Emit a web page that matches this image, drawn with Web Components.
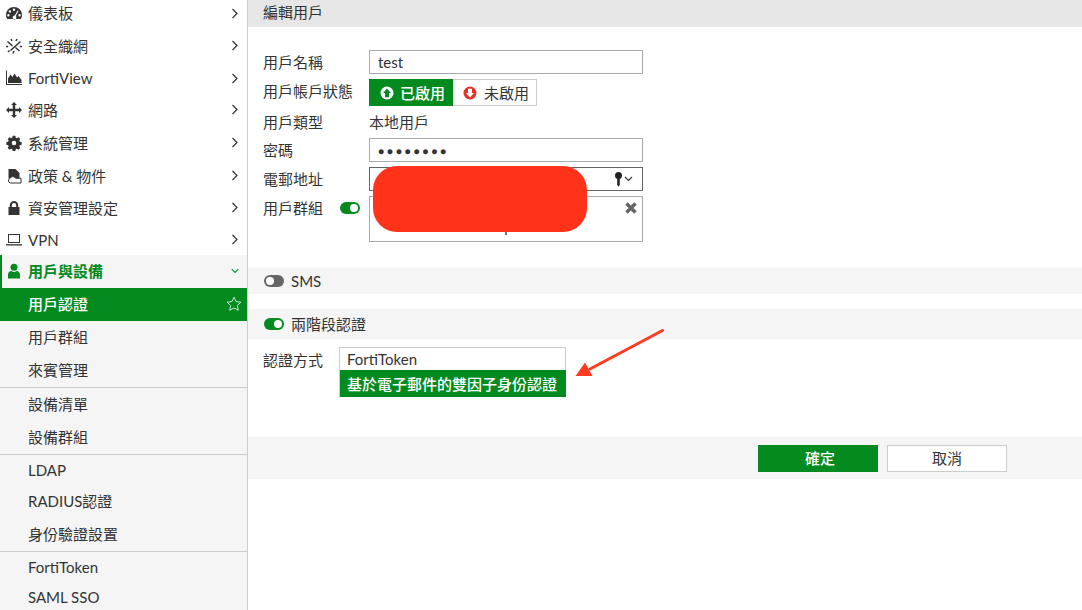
<!DOCTYPE html>
<html lang="zh-Hant">
<head>
<meta charset="utf-8">
<title>編輯用戶</title>
<style>
html,body{margin:0;padding:0;width:1082px;height:610px;overflow:hidden;background:#fff}
body{font:15px/18px Lato,"Noto Sans CJK TC",sans-serif;color:#333}
</style>
</head>
<body>
<x-app>
  <x-sidebar slot="side">
    <x-nav icon="gauge" h="32" pb="2">儀表板</x-nav>
    <x-nav icon="fabric" h="32" pb="1">安全織網</x-nav>
    <x-nav icon="chart" h="32">FortiView</x-nav>
    <x-nav icon="move" h="33" pb="2">網路</x-nav>
    <x-nav icon="cog" h="33" pb="2">系統管理</x-nav>
    <x-nav icon="policy" h="32" pb="1">政策 &amp; 物件</x-nav>
    <x-nav icon="lock" h="32" pb="1">資安管理設定</x-nav>
    <x-nav icon="laptop" h="31">VPN</x-nav>
    <x-nav icon="user" h="33" pb="2" open>用戶與設備</x-nav>
    <x-sub h="33" pb="2" active>用戶認證</x-sub>
    <x-sub h="33" pb="2">用戶群組</x-sub>
    <x-sub h="33" pb="2" sep>來賓管理</x-sub>
    <x-sub h="33" pb="2">設備清單</x-sub>
    <x-sub h="33" pb="2" sep>設備群組</x-sub>
    <x-sub h="32" pb="2">LDAP</x-sub>
    <x-sub h="32" pb="4">RADIUS認證</x-sub>
    <x-sub h="32" pb="2" sep>身份驗證設置</x-sub>
    <x-sub h="31" pb="2">FortiToken</x-sub>
    <x-sub h="31" pb="4">SAML SSO</x-sub>
  </x-sidebar>
  <x-form slot="main"></x-form>
</x-app>

<script>
const ICONS = {
  gauge:'<path fill-rule="evenodd" d="M8 2C3.600 2 0 5.500 0 9.900c0 1.500.4 2.900 1.200 4.100h13.600c.8-1.200 1.200-2.600 1.200-4.100C16 5.500 12.400 2 8 2zM8 3.600a1.200 1.200 0 1 1 0 2.400 1.200 1.200 0 0 1 0-2.400zM3.900 5.200a1.200 1.200 0 1 1 0 2.400 1.200 1.200 0 0 1 0-2.400zM2.400 9a1.200 1.200 0 1 1 0 2.400 1.200 1.200 0 0 1 0-2.400zM13.600 9a1.200 1.200 0 1 1 0 2.400 1.200 1.200 0 0 1 0-2.400zM11.600 5.600l.9.5-2.700 5a1.900 1.900 0 1 1-1-.5z"/>',
  fabric:'<g stroke="currentColor" stroke-width="1.500" fill="none"><path d="M1.500 3.500L6.500 8M14.500 3.500L4.500 12.500M9.500 9.500L13.500 13M2 14l1.500-1.500M5 1l1 2M11 1l-1 2M7 15.500l1-2.500M0 8.500h2.200M13.800 8.500h2.200"/></g>',
  chart:'<path d="M0 .5h1V14h15v1H0z"/><path d="M2 13V8.500l2.500-4L6.500 7l2-3.500L11 7.500 12.500 6 15.500 10v3z"/>',
  move:'<path d="M8 0l3 3H9.200v3.800H13V5l3 3-3 3V9.200H9.200V13H11l-3 3-3-3h1.800V9.200H3V11L0 8l3-3v1.800h3.800V3H5z"/>',
  cog:'<path fill-rule="evenodd" d="M6.500 0h3l.4 2 1.300.6 1.800-1.100 2 2-1.100 1.800.6 1.300 2 .4v3l-2 .4-.6 1.300 1.100 1.800-2 2-1.800-1.100-1.300.6-.4 2h-3l-.4-2-1.300-.6-1.800 1.100-2-2 1.100-1.800-.6-1.300-2-.4v-3l2-.4.6-1.300-1.100-1.800 2-2 1.800 1.100 1.300-.6zM8 5.500a2.500 2.500 0 1 0 0 5 2.500 2.500 0 0 0 0-5z" transform="translate(.8 .8) scale(.9)"/>',
  policy:'<path d="M2.500 1h7l4 4v5H9.500a3 3 0 0 0-5 .5H2.500z"/><path d="M4.500 15a2.300 2.300 0 0 1-.4-4.500 3 3 0 0 1 5.500-.2h5.400V15z" fill="#fff" stroke="currentColor" stroke-width="1"/>',
  lock:'<path fill-rule="evenodd" d="M8 1a4.200 4.200 0 0 0-4.200 4.200V7H2.500v8h11V7h-1.300V5.200A4.200 4.200 0 0 0 8 1zm0 2a2.200 2.200 0 0 1 2.200 2.200V7H5.800V5.200A2.200 2.200 0 0 1 8 3z"/>',
  laptop:'<path fill-rule="evenodd" d="M2 2h12v9H2zm1 1v7h10V3z"/><path d="M0 12.200h16v1.300H0z"/>',
  user:'<circle cx="8" cy="4.300" r="3.500"/><path d="M2 15.500v-3.700C2 9.300 3.700 8 5.500 8 6.300 8.600 7.100 8.900 8 8.900s1.700-.3 2.500-.9c1.800 0 3.500 1.300 3.500 3.800v3.700z"/>'
};
const svg = (name,size,extra='') => `<svg width="${size}" height="${size}" viewBox="0 0 16 16" fill="currentColor" ${extra}>${ICONS[name]}</svg>`;
const chevR = `<svg width="8" height="11" viewBox="0 0 8 11" fill="none" stroke="currentColor" stroke-width="1.200"><path d="M1.500 1l4.500 4.500L1.500 10"/></svg>`;
const chevD = `<svg width="11" height="8" viewBox="0 0 11 8" fill="none" stroke="currentColor" stroke-width="1.400"><path d="M1 1.500l4.500 4.500L10 1.500"/></svg>`;

function shadow(el, html){ el.attachShadow({mode:'open'}).innerHTML = html; return el.shadowRoot; }

customElements.define('x-app', class extends HTMLElement{
  connectedCallback(){ if(this.shadowRoot) return; shadow(this,`<style>
    :host{display:grid;grid-template-columns:248px 834px;width:1082px;height:610px;overflow:hidden}
  </style><slot name="side"></slot><slot name="main"></slot>`);}
});

customElements.define('x-sidebar', class extends HTMLElement{
  connectedCallback(){ if(this.shadowRoot) return; shadow(this,`<style>
    :host{display:block;width:248px;height:610px;box-sizing:border-box;border-right:1px solid #ccc;overflow:hidden;background:#fff}
    .inner{margin-top:-2px;display:flex;flex-direction:column}
  </style><div class="inner"><slot></slot></div>`);}
});

customElements.define('x-nav', class extends HTMLElement{
  connectedCallback(){ if(this.shadowRoot) return;
    const open=this.hasAttribute('open');
    shadow(this,`<style>
      :host{display:flex;align-items:center;height:${this.getAttribute('h')}px;padding-bottom:${this.getAttribute('pb')||0}px;box-sizing:border-box;color:#333;
        ${open?'background:#f5f5f5;color:#038b1f;font-weight:700;border-left:2px solid #038b1f;':''}}
      .ic{width:16px;height:16px;margin-left:${open?'4px':'6px'};display:flex}
      .t{margin-left:6px;flex:1;white-space:nowrap}
      .c{width:8px;margin-right:8px;display:flex;justify-content:center;color:#333;${open?'color:#038b1f;':''}}
    </style><span class="ic">${svg(this.getAttribute('icon'),16)}</span><span class="t"><slot></slot></span><span class="c">${open?chevD:chevR}</span>`);
  }
});

customElements.define('x-sub', class extends HTMLElement{
  connectedCallback(){ if(this.shadowRoot) return;
    const a=this.hasAttribute('active'), sep=this.hasAttribute('sep');
    const pb=+(this.getAttribute('pb')||0), h=+this.getAttribute('h');
    const star=`<svg width="16" height="16" viewBox="0 0 16 16" fill="none" stroke="#cfe8d3" stroke-width="1"><path d="M8 1.200l2.100 4.400 4.800.6-3.500 3.300.9 4.800L8 12l-4.300 2.300.9-4.800L1.100 6.200l4.800-.6z"/></svg>`;
    shadow(this,`<style>
      :host{display:flex;align-items:center;height:${h-pb}px;padding-bottom:${pb}px;box-sizing:content-box;padding-left:28px;padding-right:5px;
        background:${a?'#038b1f':'#f5f5f5'};color:${a?'#fff':'#333'};${a?'font-weight:500;':''}
        ${sep?'border-bottom:1px solid #ccc;':''}}
      .t{flex:1;white-space:nowrap}
      .s{display:flex}
    </style><span class="t"><slot></slot></span>${a?`<span class="s">${star}</span>`:''}`);
  }
});

customElements.define('x-switch', class extends HTMLElement{
  connectedCallback(){ if(this.shadowRoot) return;
    const on=this.hasAttribute('on');
    shadow(this,`<style>
      :host{display:inline-flex;width:20px;height:12px;border-radius:6px;background:${on?'#038b1f':'#666'};box-sizing:border-box;padding:2px;flex:none;
        justify-content:${on?'flex-end':'flex-start'}}
      i{display:block;width:8px;height:8px;border-radius:50%;background:#fff}
    </style><i></i>`);
  }
});

customElements.define('x-field', class extends HTMLElement{
  connectedCallback(){ if(this.shadowRoot) return;
    shadow(this,`<style>
      :host{display:grid;grid-template-columns:106px 274px;align-items:center;height:${this.getAttribute('h')}px;margin-top:${this.getAttribute('mt')||0}px}
      .l{display:flex;align-items:center;justify-content:space-between;white-space:nowrap;padding-right:9px;padding-top:${this.getAttribute('lpt')||0}px;padding-bottom:${this.getAttribute('lpb')||0}px}
    </style><span class="l"><span>${this.getAttribute('label')}</span><slot name="extra"></slot></span><slot></slot>`);
  }
});

customElements.define('x-input', class extends HTMLElement{
  connectedCallback(){ if(this.shadowRoot) return;
    const dark=this.hasAttribute('dark');
    shadow(this,`<style>
      :host{display:flex;align-items:center;box-sizing:border-box;height:24px;width:274px;background:#fff;
        border:1px solid ${dark?'#666':'#aaa'};padding:0 8px;color:#333}
      .t{flex:1;white-space:nowrap}
      .e{display:flex;align-items:center;margin-right:-2px}
    </style><span class="t"><slot></slot></span><span class="e"><slot name="end"></slot></span>`);
  }
});

customElements.define('x-state', class extends HTMLElement{
  connectedCallback(){ if(this.shadowRoot) return;
    const arrow=(up,bg,fg)=>`<svg width="14" height="14" viewBox="0 0 14 14"><circle cx="7" cy="7" r="6.500" fill="${bg}"/><path fill="${fg}" d="${up?'M7 2.600L11 7 9 7v4.200H5V7H3z':'M7 11.400L3 7h2V2.800h4V7h2z'}"/></svg>`;
    shadow(this,`<style>
      :host{display:flex;width:168px;height:27px;box-sizing:border-box}
      .b{display:flex;align-items:center;box-sizing:border-box;height:27px;white-space:nowrap}
      .on{width:84px;background:#038b1f;color:#fff;font-weight:500;padding-left:11px;gap:6px}
      .off{width:84px;background:#fff;color:#333;border:1px solid #ccc;border-left:0;padding-left:10px;gap:7px}
    </style><span class="b on">${arrow(true,'#fff','#038b1f')}已啟用</span><span class="b off">${arrow(false,'#e53226','#fff')}未啟用</span>`);
  }
});

customElements.define('x-section', class extends HTMLElement{
  connectedCallback(){ if(this.shadowRoot) return;
    shadow(this,`<style>
      :host{display:flex;align-items:center;gap:7px;height:${this.getAttribute('h')}px;background:#f5f5f5;padding-left:16px;
        margin-top:${this.getAttribute('mt')||0}px;white-space:nowrap}
    </style><slot></slot>`);
  }
});

customElements.define('x-btn', class extends HTMLElement{
  connectedCallback(){ if(this.shadowRoot) return;
    const p=this.hasAttribute('primary');
    shadow(this,`<style>
      :host{display:flex;align-items:center;justify-content:center;box-sizing:border-box;width:120px;height:27px;
        ${p?'background:#038b1f;color:#fff;font-weight:500;padding-left:4px;':'background:#fff;color:#333;border:1px solid #ccc;'}}
    </style><slot></slot>`);
  }
});

customElements.define('x-form', class extends HTMLElement{
  connectedCallback(){ if(this.shadowRoot) return;
    shadow(this,`<style>
      :host{display:block;position:relative;height:610px;overflow:hidden;background:#fff}
      .head{height:27px;box-sizing:border-box;background:#e6e6e6;padding:0 0 3px 15px;display:flex;align-items:center}
      .form{padding:23px 0 0 15px}
      .box{box-sizing:border-box;width:274px;height:46px;border:1px solid #aaa;background:#fff;display:flex;justify-content:flex-end;padding:4px 4px 0 0;color:#666;align-self:start}
      .dots{font-size:10px;letter-spacing:2.870px;color:#333}
      .auth{display:grid;grid-template-columns:76px 227px;padding:8px 0 0 15px;height:50px}
      .auth .l{margin-top:4px}
      .list{box-sizing:border-box;width:227px;height:50px;display:flex;flex-direction:column;border:1px solid #ccc;border-bottom:0;background:#fff}
      .list .a{height:22px;padding-left:7px;display:flex;align-items:center;flex:none}
      .list .b{height:27px;padding-left:7px;display:flex;align-items:center;background:#038b1f;color:#fff;font-weight:500;white-space:nowrap;flex:none;margin-right:-1px}
      .foot{margin-top:40px;height:42px;background:#f5f5f5;display:flex;align-items:center;gap:9px;padding-left:510px}
      .blob{position:absolute;left:125px;top:166px;width:214px;height:66px;border-radius:24px;background:#ff331a}
      .tick{position:absolute;left:257px;top:232px;width:2px;height:3px;background:#777}
      .arrow{position:absolute;left:320px;top:322px}
    </style>
    <div class="head">編輯用戶</div>
    <div class="form">
      <x-field label="用戶名稱" h="24"><x-input>test</x-input></x-field>
      <x-field label="用戶帳戶狀態" h="27" mt="5" lpb="3"><x-state></x-state></x-field>
      <x-field label="用戶類型" h="32"><span>本地用戶</span></x-field>
      <x-field label="密碼" h="24"><x-input><span class="dots">●●●●●●●●</span></x-input></x-field>
      <x-field label="電郵地址" h="24" mt="5"><x-input dark>
        <svg slot="end" width="22" height="16" viewBox="0 0 22 16"><circle cx="4.500" cy="4.500" r="3.500" fill="#222"/><path d="M3.200 6h2.600v8l-1.300 1.500-1.300-1.500z" fill="#222"/><path d="M11 6l3.500 3.500L18 6" fill="none" stroke="#333" stroke-width="1.100"/></svg>
      </x-input></x-field>
      <x-field label="用戶群組" h="46" mt="5" lpt="3" style="align-items:start">
        <x-switch slot="extra" on></x-switch>
        <div class="box"><svg width="14" height="14" viewBox="0 0 14 14"><path d="M2.500 2.500l9 9M11.500 2.500l-9 9" stroke="#666" stroke-width="3.500"/></svg></div>
      </x-field>
    </div>
    <x-section h="27" mt="25"><x-switch></x-switch><span>SMS</span></x-section>
    <x-section h="30" mt="15"><x-switch on></x-switch><span>兩階段認證</span></x-section>
    <div class="auth"><span class="l">認證方式</span><div class="list"><span class="a">FortiToken</span><span class="b">基於電子郵件的雙因子身份認證</span></div></div>
    <div class="foot"><x-btn primary>確定</x-btn><x-btn>取消</x-btn></div>
    <div class="tick"></div>
    <div class="blob"></div>
    <svg class="arrow" width="100" height="60" viewBox="0 0 100 60"><path d="M94.500 8.500L22 47" stroke="#ff3b20" stroke-width="3" stroke-linecap="round"/><path d="M7.500 54L17 40.500 24.500 54z" fill="#ff3b20"/></svg>`);
  }
});
</script>
</body>
</html>
